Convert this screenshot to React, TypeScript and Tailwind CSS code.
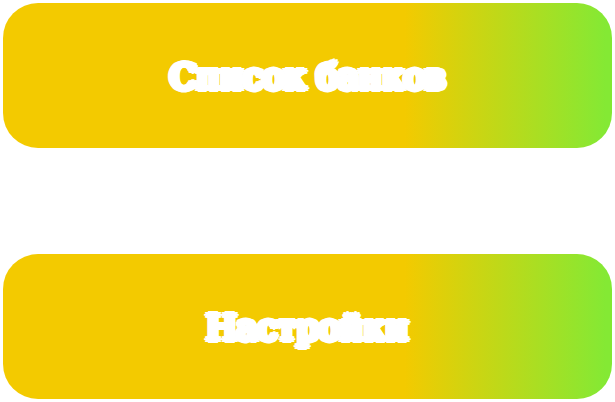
const items: string[] = ["Список банков", "Настройки"];

export default function App() {
  return (
    <nav className="flex flex-col gap-[106px] bg-white p-[3px]">
      {items.map((label) => (
        <button
          key={label}
          type="button"
          className="flex h-[145px] w-full items-center justify-center rounded-[35px] bg-linear-to-r/srgb from-[#f3ca00] from-66% to-[#84e934] to-99% pt-[2px] font-['DejaVu_Serif',serif] text-[35px] leading-[48px] text-white [-webkit-text-stroke:4px_white] [text-shadow:4px_0_white,-4px_0_white,0_3px_white,0_-3px_white,3px_2px_white,-3px_2px_white,3px_-2px_white,-3px_-2px_white]"
        >
          {label}
        </button>
      ))}
    </nav>
  );
}
